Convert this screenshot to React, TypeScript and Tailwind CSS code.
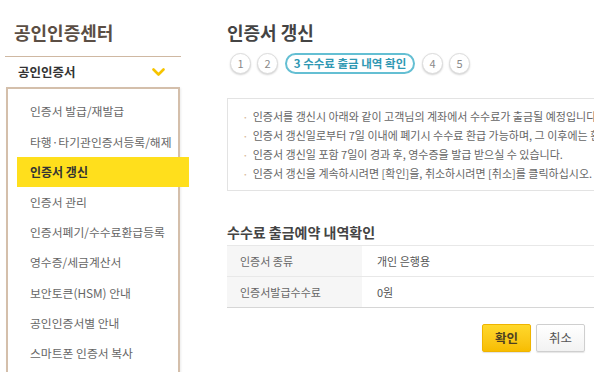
import React from "react";

const menu = [
  "인증서 발급/재발급",
  "타행·타기관인증서등록/해제",
  "인증서 갱신",
  "인증서 관리",
  "인증서폐기/수수료환급등록",
  "영수증/세금계산서",
  "보안토큰(HSM) 안내",
  "공인인증서별 안내",
  "스마트폰 인증서 복사",
];

const notices = [
  "인증서를 갱신시 아래와 같이 고객님의 계좌에서 수수료가 출금될 예정입니다.",
  "인증서 갱신일로부터 7일 이내에 폐기시 수수료 환급 가능하며, 그 이후에는 환급이 불가능합니다.",
  "인증서 갱신일 포함 7일이 경과 후, 영수증을 발급 받으실 수 있습니다.",
  "인증서 갱신을 계속하시려면 [확인]을, 취소하시려면 [취소]를 클릭하십시오.",
];

function Circle({ n }: { n: string }) {
  return (
    <div className="w-[21px] h-[21px] shrink-0 rounded-full border border-[#dcdcdc] bg-white shadow-[0_1px_2px_rgba(0,0,0,0.18)] flex items-center justify-center text-[11px] leading-none text-[#8a8a8a]">
      {n}
    </div>
  );
}

export default function App() {
  return (
    <div className="w-[594px] h-[372px] overflow-hidden bg-white flex font-['Noto_Sans_CJK_KR',sans-serif]">
      {/* Sidebar */}
      <div className="w-[176px] ml-[5px] shrink-0">
        <div className="h-[57px] border-b border-[#cfb8a2] pt-[22px] pl-[9px] text-[18px] leading-[20px] font-bold text-[#5b4e44]">
          공인인증센터
        </div>
        <div className="h-[30px] flex items-center justify-between pl-[13px] pr-[16px]">
          <span className="text-[12.5px] font-bold text-[#333]">공인인증서</span>
          <svg width="13" height="9" viewBox="0 0 13 9">
            <path d="M1.5 1.5 L6.5 6.5 L11.5 1.5" fill="none" stroke="#f6c400" strokeWidth="2.6" strokeLinecap="round" strokeLinejoin="round" />
          </svg>
        </div>
        <div className="ml-[1px] w-[174px] h-[300px] border-2 border-[#d4bfab] pt-[7px] shadow-[1px_1px_2px_rgba(0,0,0,0.08)]">
          {menu.map((m, i) =>
            i === 2 ? (
              <div
                key={m}
                className="relative ml-[9px] w-[172px] h-[30px] bg-[#ffdf1c] flex items-center pl-[13px] text-[12px] font-bold text-[#333]"
              >
                {m}
              </div>
            ) : (
              <div key={m} className="h-[30.3px] flex items-center pl-[22px] text-[11.8px] text-[#666]">
                {m}
              </div>
            )
          )}
        </div>
      </div>

      {/* Main */}
      <div className="ml-[46px] w-[420px] shrink-0">
        <div className="pt-[22px] text-[18px] leading-[20px] font-bold text-[#444]">인증서 갱신</div>
        <div className="mt-[11px] ml-[3px] flex items-center gap-[6px]">
          <Circle n="1" />
          <Circle n="2" />
          <div className="h-[21px] w-[130px] shrink-0 mx-[1px] rounded-full border-2 border-[#64bfd3] flex items-center justify-center text-[11.5px] font-bold leading-none text-[#2f98b3]">
            3 수수료 출금 내역 확인
          </div>
          <Circle n="4" />
          <Circle n="5" />
        </div>

        <div className="mt-[24px] h-[93px] w-[420px] border border-[#e3e3e3] pt-[8px] pl-[14px] overflow-hidden">
          {notices.map((t) => (
            <div key={t} className="flex items-center h-[19px] whitespace-nowrap text-[11px] text-[#666]">
              <span className="text-[#d9b89a] mr-[4px] text-[12px]">·</span>
              {t}
            </div>
          ))}
        </div>

        <div className="mt-[31px] text-[14px] leading-[20px] font-bold text-[#444]">수수료 출금예약 내역확인</div>
        <div className="mt-[3px] border-t border-[#e8e8e8] border-b border-b-[#d6d6d6] w-[420px]">
          <div className="flex h-[31px] border-b border-[#e8e8e8]">
            <div className="w-[135px] bg-[#f6f6f6] flex items-center pl-[13px] text-[11px] text-[#666]">인증서 종류</div>
            <div className="flex items-center pl-[15px] text-[11px] text-[#555]">개인 은행용</div>
          </div>
          <div className="flex h-[30px]">
            <div className="w-[135px] bg-[#f6f6f6] flex items-center pl-[13px] text-[11px] text-[#666]">인증서발급수수료</div>
            <div className="flex items-center pl-[15px] text-[11px] text-[#555]">0원</div>
          </div>
        </div>

        <div className="mt-[16px] ml-[255px] flex gap-[5px]">
          <button className="w-[49px] h-[28px] rounded-[2px] border border-[#efb400] bg-gradient-to-b from-[#ffd82a] to-[#f7bd00] text-[12.5px] font-bold text-[#4d3f22] shadow-[0_1px_1px_rgba(0,0,0,0.12)]">
            확인
          </button>
          <button className="w-[49px] h-[28px] rounded-[2px] border border-[#cfcfcf] bg-gradient-to-b from-white to-[#f2f2f2] text-[12.5px] text-[#555] shadow-[0_1px_1px_rgba(0,0,0,0.1)]">
            취소
          </button>
        </div>
      </div>
    </div>
  );
}
